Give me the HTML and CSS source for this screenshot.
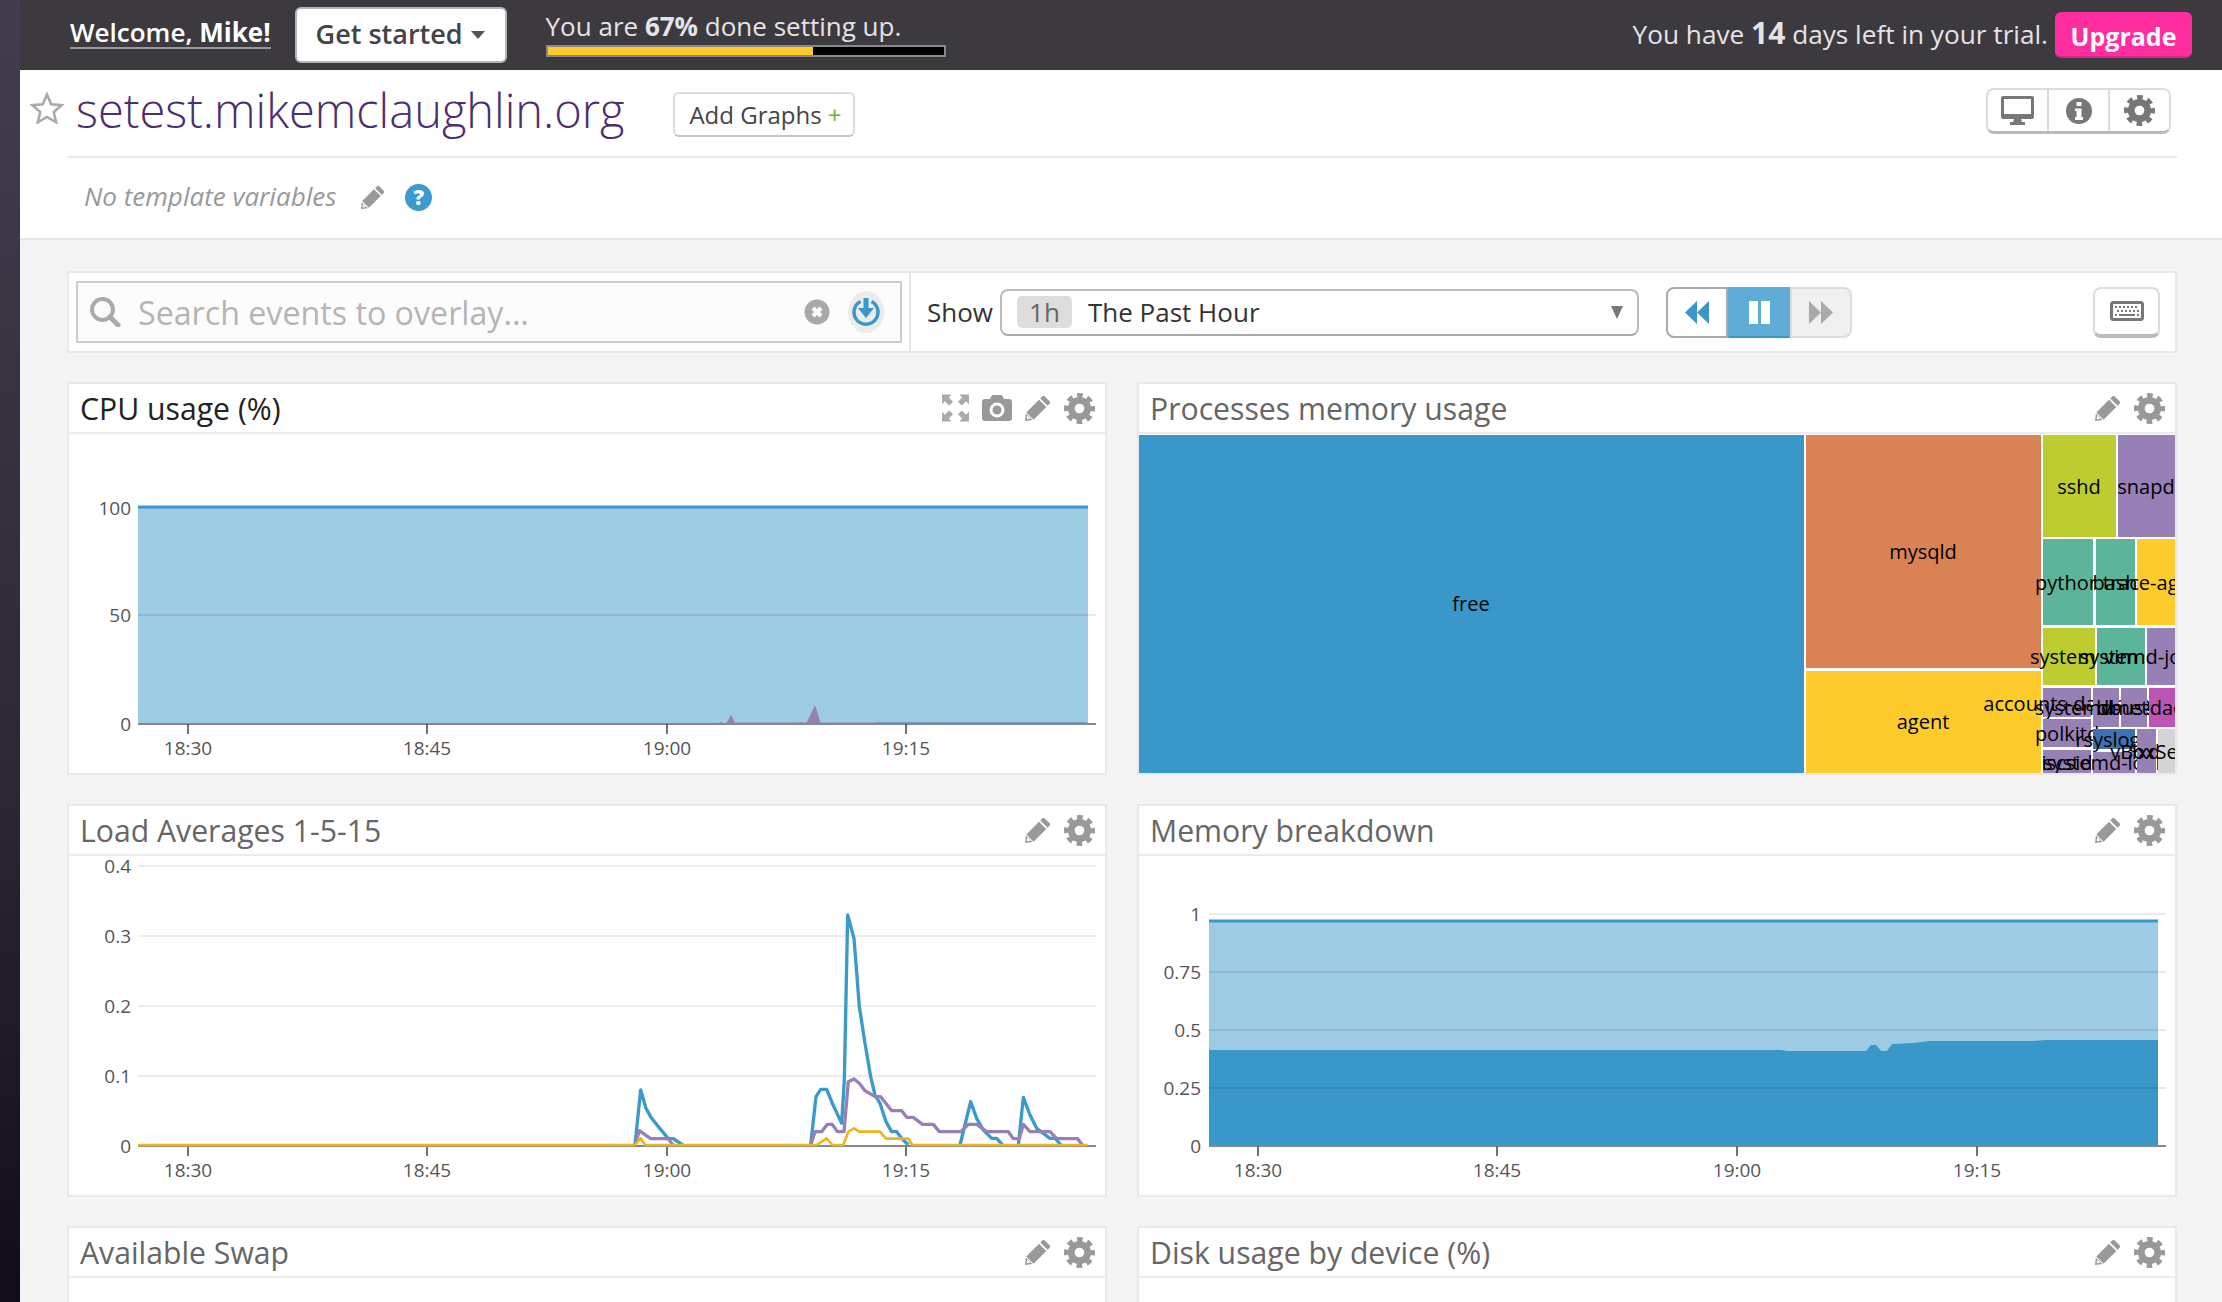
FILE: index.html
```html
<!DOCTYPE html>
<html lang="en-us">
  <head>
    <meta charset="utf-8">
    <title>setest.mikemclaughlin.org</title>
    <link rel="stylesheet" href="styles.css">
  </head>
  <body>
    <svg class="defs" aria-hidden="true">
      <symbol id="i-gear" viewBox="0 0 32 32">
        <circle cx="16" cy="16" r="8.5" fill="none" stroke="currentColor" stroke-width="7"/>
        <circle cx="16" cy="16" r="13" fill="none" stroke="currentColor" stroke-width="6" stroke-dasharray="5.6 4.61" stroke-dashoffset="2.8"/>
      </symbol>
      <symbol id="i-pencil" viewBox="0 0 26 26">
        <path fill="currentColor" d="M19.5 1.2 24.8 6.5a1.5 1.5 0 0 1 0 2L22.6 10.7 15.3 3.4 17.5 1.2a1.5 1.5 0 0 1 2 0Z"/>
        <path fill="currentColor" d="M14 4.7 21.3 12 8.6 24.7 1.3 17.4Z"/>
        <path fill="currentColor" d="M.9 18.6 7.4 25.1 0 26Z"/>
        <path fill="#fff" d="M2.2 20.6 5.4 23.8 1.7 24.3Z"/>
      </symbol>
      <symbol id="i-camera" viewBox="0 0 30 26">
        <path fill="currentColor" fill-rule="evenodd" d="M3 4H8L9.5 1Q10 0 11 0H19Q20 0 20.500 1L22 4H27Q30 4 30 7V23Q30 26 27 26H3Q0 26 0 23V7Q0 4 3 4ZM15 7.500A7.500 7.500 0 1 0 15 22.500 7.500 7.500 0 1 0 15 7.500ZM15 10.500A4.500 4.500 0 1 1 15 19.500 4.500 4.500 0 1 1 15 10.500Z"/>
      </symbol>
      <symbol id="i-expand" viewBox="0 0 28 28">
        <g fill="currentColor">
          <path d="M0 0H10L7 3 11.500 7.500 7.500 11.500 3 7 0 10Z"/>
          <path transform="matrix(-1 0 0 1 28 0)" d="M0 0H10L7 3 11.500 7.500 7.500 11.500 3 7 0 10Z"/>
          <path transform="matrix(1 0 0 -1 0 28)" d="M0 0H10L7 3 11.500 7.500 7.500 11.500 3 7 0 10Z"/>
          <path transform="matrix(-1 0 0 -1 28 28)" d="M0 0H10L7 3 11.500 7.500 7.500 11.500 3 7 0 10Z"/>
        </g>
      </symbol>
    </svg>

    <div class="rail"></div>
    <div class="main">
      <div class="trialbar">
        <a class="welcome">Welcome, <b>Mike!</b></a>
        <button class="started">Get started <span class="caret"></span></button>
        <div class="setup">
          <div class="setup-text">You are <b>67%</b> done setting up.</div>
          <div class="setup-bar"><div class="setup-fill" style="width: 67%"></div></div>
        </div>
        <div class="trial-left">You have <b>14</b> days left in your trial.</div>
        <button class="upgrade">Upgrade</button>
      </div>

      <div class="page-head">
        <div class="title-row">
          <svg class="star" viewBox="0 0 34 32"><path d="M17 2.500 21.200 12.200 31.700 13.100 23.800 20 26.100 30.300 17 24.900 7.900 30.300 10.200 20 2.300 13.100 12.800 12.200Z"/></svg>
          <h1 class="dash-title">setest.mikemclaughlin.org</h1>
          <button class="add-graphs">Add Graphs <span class="plus">+</span></button>
          <div class="head-tools">
            <div class="head-tool">
              <svg width="33" height="29" viewBox="0 0 33 29"><path fill="#777" fill-rule="evenodd" d="M2 0H31Q33 0 33 2V21Q33 23 31 23H20L21 26H24V29H9V26H12L13 23H2Q0 23 0 21V2Q0 0 2 0ZM3 3V18H30V3Z"/></svg>
            </div>
            <div class="head-tool">
              <svg width="26" height="26" viewBox="0 0 26 26"><path fill="#777" fill-rule="evenodd" d="M13 0A13 13 0 1 1 13 26 13 13 0 1 1 13 0ZM10.500 4V8H15.500V4ZM9 10.500V13H10.500V19H9V22H17V19H15.500V10.500Z"/></svg>
            </div>
            <div class="head-tool">
              <svg class="gear-lg"><use href="#i-gear"/></svg>
            </div>
          </div>
        </div>
        <div class="template-row">
          <span class="no-vars">No template variables</span>
          <svg class="ico pencil-sm"><use href="#i-pencil"/></svg>
          <span class="help">?</span>
        </div>
      </div>

      <div class="content">
        <div class="event-bar">
          <div class="search-cell">
            <div class="search-box">
              <svg class="search-ico" width="31" height="30" viewBox="0 0 31 30"><circle cx="12.500" cy="12.500" r="10.500" fill="none" stroke="#aaa" stroke-width="4"/><path d="M20 20 28 28" stroke="#aaa" stroke-width="5" stroke-linecap="round"/></svg>
              <span class="placeholder">Search events to overlay...</span>
              <svg class="clear-ico" width="26" height="26" viewBox="0 0 26 26"><circle cx="13" cy="13" r="12.500" fill="#a8a8a8"/><path d="M9 9 17 17M17 9 9 17" stroke="#fff" stroke-width="4"/></svg>
              <span class="overlay-btn">
                <svg width="28" height="30" viewBox="0 0 28 30"><path d="M8.500 4.500A12 12 0 1 0 19.500 4.500" fill="none" stroke="#3a97c9" stroke-width="3.500"/><path fill="#3a97c9" d="M11.500 1H16.500V11H22L14 21 6 11H11.500Z"/></svg>
              </span>
            </div>
          </div>
          <div class="time-cell">
            <span class="show">Show</span>
            <div class="range-select">
              <span class="range-tag">1h</span>
              <span class="range-name">The Past Hour</span>
              <span class="range-caret"></span>
            </div>
            <div class="player">
              <span class="player-btn rewind"><svg width="24" height="23" viewBox="0 0 24 23"><path fill="#3a97c9" d="M12 0V23L0 11.500ZM24 0V23L12 11.500Z"/></svg></span>
              <span class="player-btn pause"><svg width="23" height="23" viewBox="0 0 23 23"><path fill="#fff" d="M1 0H10V23H1ZM13 0H22V23H13Z"/></svg></span>
              <span class="player-btn forward"><svg width="24" height="23" viewBox="0 0 24 23"><path fill="#aaa" d="M0 0V23L12 11.500ZM12 0V23L24 11.500Z"/></svg></span>
            </div>
            <span class="keyboard-btn">
              <svg width="34" height="20" viewBox="0 0 34 20"><rect x="1.500" y="1.500" width="31" height="17" rx="2" fill="#fff" stroke="#777" stroke-width="3"/><path stroke="#777" stroke-width="2" stroke-dasharray="2 2" d="M5 6H29M7 10H29"/><path stroke="#777" stroke-width="2" d="M5 14H7M9 14H25M27 14H29"/></svg>
            </span>
          </div>
        </div>

        <div class="board">
          <section class="card">
            <header class="card-head is-active">
              <h2>CPU usage (%)</h2>
              <div class="card-tools">
                <svg class="ico expand"><use href="#i-expand"/></svg>
                <svg class="ico camera"><use href="#i-camera"/></svg>
                <svg class="ico pencil"><use href="#i-pencil"/></svg>
                <svg class="ico gear"><use href="#i-gear"/></svg>
              </div>
            </header>
            <svg class="chart" viewBox="69 434 1036 339">
              <rect x="138" y="507" width="950" height="217" fill="#9dcbe3"/>
              <path fill="#9680b6" d="M716 724 721 722 726 724 731 715 736 724H796L800 722 805 724H806L815 705 821 724Z"/>
              <path d="M736 723H1087" stroke="#9680b6" stroke-width="1"/>
              <path d="M876 723H1087" stroke="#3a97c9" stroke-width="1"/>
              <path d="M138 507H1088" stroke="#3a97c9" stroke-width="3"/>
              <path class="grid-over" d="M138 615H1096"/>
              <path class="axis" d="M138 724H1096"/>
              <path class="tick" d="M188 724V734M427 724V734M667 724V734M906 724V734"/>
              <g class="y-labels">
                <text x="131" y="508">100</text>
                <text x="131" y="615">50</text>
                <text x="131" y="724">0</text>
              </g>
              <g class="x-labels">
                <text x="188" y="748">18:30</text>
                <text x="427" y="748">18:45</text>
                <text x="667" y="748">19:00</text>
                <text x="906" y="748">19:15</text>
              </g>
            </svg>
          </section>

          <section class="card">
            <header class="card-head">
              <h2>Processes memory usage</h2>
              <div class="card-tools">
                <svg class="ico pencil"><use href="#i-pencil"/></svg>
                <svg class="ico gear"><use href="#i-gear"/></svg>
              </div>
            </header>
            <!-- cells are painted biggest first, each one covers the labels spilling from the cells before it -->
            <svg class="chart treemap" viewBox="1139 434 1036 339">
              <rect x="1139" y="435" width="665" height="338" fill="#3a97c9"/>
              <text x="1471" y="603">free</text>
              <rect x="1806" y="435" width="235" height="233" fill="#d98255"/>
              <text x="1923" y="551">mysqld</text>
              <rect x="1806" y="671" width="235" height="102" fill="#fecb2d"/>
              <text x="1923" y="721">agent</text>
              <rect x="2043" y="435" width="73" height="102" fill="#bdcc2f"/>
              <text x="2079" y="486">sshd</text>
              <rect x="2118" y="435" width="57" height="102" fill="#9680b6"/>
              <text x="2146" y="486">snapd</text>
              <rect x="2043" y="539" width="50" height="86" fill="#5cb59a"/>
              <text x="2068" y="582">python</text>
              <rect x="2096" y="539" width="39" height="86" fill="#5cb59a"/>
              <text x="2115" y="582">bash</text>
              <rect x="2137" y="539" width="38" height="86" fill="#fecb2d"/>
              <text x="2156" y="582">trace-agent</text>
              <rect x="2043" y="628" width="52" height="57" fill="#bdcc2f"/>
              <text x="2069" y="656">systemd</text>
              <rect x="2097" y="628" width="48" height="57" fill="#5cb59a"/>
              <text x="2121" y="656">vim</text>
              <rect x="2147" y="628" width="28" height="57" fill="#9680b6"/>
              <text x="2161" y="656">systemd-journald</text>
              <rect x="2043" y="688" width="48" height="29" fill="#9680b6"/>
              <text x="2067" y="703">accounts-daemon</text>
              <rect x="2093" y="688" width="26" height="39" fill="#9680b6"/>
              <text x="2106" y="707">systemd-udevd</text>
              <rect x="2121" y="688" width="26" height="39" fill="#9680b6"/>
              <text x="2134" y="707">lvmetad</text>
              <rect x="2149" y="688" width="26" height="39" fill="#bb55b4"/>
              <text x="2162" y="707">dbus-daemon</text>
              <rect x="2043" y="719" width="48" height="28" fill="#9680b6"/>
              <text x="2067" y="733">polkitd</text>
              <rect x="2093" y="729" width="42" height="20" fill="#3f70b3"/>
              <text x="2114" y="739">rsyslogd</text>
              <rect x="2043" y="750" width="48" height="23" fill="#9680b6"/>
              <text x="2067" y="762">iscsid</text>
              <rect x="2093" y="752" width="42" height="21" fill="#9680b6"/>
              <text x="2114" y="762">systemd-logind</text>
              <rect x="2137" y="729" width="19" height="44" fill="#9680b6"/>
              <text x="2146" y="751">lxd</text>
              <rect x="2158" y="729" width="17" height="44" fill="#d4d4d4"/>
              <text x="2166" y="751">vBoxService</text>
            </svg>
          </section>

          <section class="card">
            <header class="card-head">
              <h2>Load Averages 1-5-15</h2>
              <div class="card-tools">
                <svg class="ico pencil"><use href="#i-pencil"/></svg>
                <svg class="ico gear"><use href="#i-gear"/></svg>
              </div>
            </header>
            <svg class="chart" viewBox="69 856 1036 339">
              <path class="grid" d="M138 866H1096M138 936H1096M138 1006H1096M138 1076H1096"/>
              <path class="axis" d="M138 1146H1096"/>
              <g transform="translate(600 880) scale(.33333)" fill="none" stroke-width="10" stroke-linejoin="round">
                <g stroke="#3a9bcb">
                  <polyline points="105,795 122,630 138,685 155,715 175,740 205,776 220,776 248,795"/>
                  <polyline points="632,795 648,650 662,628 680,628 698,672 725,730 733,600 743,105 762,175 778,380 795,490 812,590 825,645 840,670 858,725 875,755 890,755 905,775 925,795"/>
                  <polyline points="1080,795 1112,665 1130,715 1150,750 1175,775 1190,775 1208,795"/>
                  <polyline points="1255,795 1270,652 1290,705 1310,745 1350,775 1365,775 1383,795"/>
                </g>
                <g stroke="#9680b6">
                  <polyline points="105,795 118,752 152,776 205,776 218,795"/>
                  <polyline points="632,795 645,755 665,755 682,733 697,733 712,755 732,755 745,605 762,597 778,610 795,632 825,650 842,650 875,692 905,692 920,712 940,712 968,733 1000,733 1018,755 1083,755 1105,733 1130,733 1160,755 1225,755 1240,776 1258,776 1270,733 1290,755 1350,755 1370,776 1433,776 1447,795"/>
                </g>
                <polyline stroke="#ecb51f" stroke-width="8" points="-1386,795 105,795 122,775 135,795 650,795 680,775 697,795 730,795 745,755 762,745 778,755 840,755 858,776 925,776 937,795 1462,795"/>
              </g>
              <path class="tick" d="M188 1147V1156M427 1147V1156M667 1147V1156M906 1147V1156"/>
              <g class="y-labels">
                <text x="131" y="866">0.4</text>
                <text x="131" y="936">0.3</text>
                <text x="131" y="1006">0.2</text>
                <text x="131" y="1076">0.1</text>
                <text x="131" y="1146">0</text>
              </g>
              <g class="x-labels">
                <text x="188" y="1170">18:30</text>
                <text x="427" y="1170">18:45</text>
                <text x="667" y="1170">19:00</text>
                <text x="906" y="1170">19:15</text>
              </g>
            </svg>
          </section>

          <section class="card">
            <header class="card-head">
              <h2>Memory breakdown</h2>
              <div class="card-tools">
                <svg class="ico pencil"><use href="#i-pencil"/></svg>
                <svg class="ico gear"><use href="#i-gear"/></svg>
              </div>
            </header>
            <svg class="chart" viewBox="1139 856 1036 339">
              <path class="grid" d="M1209 914H2166"/>
              <rect x="1209" y="921" width="949" height="225" fill="#9dcbe3"/>
              <path fill="#3a97c9" d="M1209 1050H1780L1788 1051H1827L1832 1051H1866L1871 1045H1876L1881 1051H1887L1892 1044 1913 1043 1930 1041 2033 1041 2047 1040H2158V1146H1209Z"/>
              <path d="M1209 921H2158" stroke="#3a97c9" stroke-width="3"/>
              <path class="grid-over" d="M1209 972H2166M1209 1030H2166M1209 1088H2166"/>
              <path class="axis" d="M1209 1146H2166"/>
              <path class="tick" d="M1258 1146V1156M1497 1146V1156M1737 1146V1156M1977 1146V1156"/>
              <g class="y-labels">
                <text x="1201" y="914">1</text>
                <text x="1201" y="972">0.75</text>
                <text x="1201" y="1030">0.5</text>
                <text x="1201" y="1088">0.25</text>
                <text x="1201" y="1146">0</text>
              </g>
              <g class="x-labels">
                <text x="1258" y="1170">18:30</text>
                <text x="1497" y="1170">18:45</text>
                <text x="1737" y="1170">19:00</text>
                <text x="1977" y="1170">19:15</text>
              </g>
            </svg>
          </section>

          <section class="card">
            <header class="card-head">
              <h2>Available Swap</h2>
              <div class="card-tools">
                <svg class="ico pencil"><use href="#i-pencil"/></svg>
                <svg class="ico gear"><use href="#i-gear"/></svg>
              </div>
            </header>
          </section>

          <section class="card">
            <header class="card-head">
              <h2>Disk usage by device (%)</h2>
              <div class="card-tools">
                <svg class="ico pencil"><use href="#i-pencil"/></svg>
                <svg class="ico gear"><use href="#i-gear"/></svg>
              </div>
            </header>
          </section>
        </div>
      </div>
    </div>
  </body>
</html>
```

FILE: styles.css
```css
html, body { margin: 0; padding: 0; height: 100%; overflow: hidden; }
body {
  display: flex;
  font-family: "Open Sans", "Liberation Sans", sans-serif;
  color: #333;
  background: #f4f4f4;
}
button { font-family: inherit; cursor: pointer; }
h1, h2 { margin: 0; font-weight: 400; }

.defs { position: absolute; width: 0; height: 0; }

.rail {
  flex: 0 0 20px;
  background: linear-gradient(#443d4e, #2d2735 60%, #100c18);
}
.main { flex: 1; min-width: 0; }

/* top trial bar */
.trialbar {
  display: flex;
  align-items: center;
  height: 70px;
  padding: 0 30px 0 50px;
  box-sizing: border-box;
  background: #3c3a3f;
  color: #e4e4e8;
  font-size: 26px;
}
.welcome {
  margin-top: -4px;
  color: #fff;
  font-weight: 600;
  border-bottom: 2px solid #999;
  line-height: 30px;
}
.welcome b { font-weight: 700; }
.started {
  display: flex;
  align-items: center;
  gap: 8px;
  width: 212px;
  height: 56px;
  margin-left: 24px;
  padding: 0 0 3px 19px;
  background: #fff;
  border: 2px solid #b5b5b5;
  border-radius: 6px;
  color: #444;
  font-size: 27px;
  font-weight: 600;
}
.caret { border: 7px solid transparent; border-top: 8px solid #555; border-bottom: 0; margin-top: 3px; }
.setup { width: 400px; margin-left: 39px; margin-top: -6px; }
.setup-text { line-height: 34px; padding-top: 1px; white-space: nowrap; }
.setup-text b { font-weight: 700; }
.setup-bar { height: 8px; margin-top: 2px; background: #000; border: 2px solid #888; }
.setup-fill { height: 100%; background: #fecb2d; }
.trial-left { margin-left: auto; margin-top: -6px; font-size: 26.200px; white-space: nowrap; }
.trial-left b { font-size: 30px; font-weight: 700; }
.upgrade {
  width: 137px;
  height: 46px;
  margin-left: 7px;
  padding: 4px 0 0;
  background: #ff2da0;
  border: 0;
  border-bottom: 2px solid #d8248a;
  border-radius: 6px;
  color: #fff;
  font-size: 25px;
  font-weight: 700;
}

/* dashboard heading */
.page-head {
  height: 168px;
  box-sizing: content-box;
  padding-left: 48px;
  padding-right: 45px;
  background: #fff;
  border-bottom: 2px solid #e6e6e6;
}
.title-row {
  display: flex;
  align-items: flex-start;
  height: 86px;
  border-bottom: 2px solid #e8e8e8;
}
.star { width: 34px; height: 32px; margin: 22px 12px 0 -38px; flex: none; }
.star path { fill: #fff; stroke: #aaa; stroke-width: 2.6; }
.dash-title {
  width: 547px;
  color: #4a2f6f;
  font-size: 47px;
  font-weight: 300;
  line-height: 80px;
  white-space: nowrap;
}
.add-graphs {
  width: 182px;
  height: 45px;
  margin: 22px 0 0 50px;
  padding: 0 0 0 3px;
  background: #fff;
  border: 2px solid #ddd;
  border-bottom-color: #c4c4c4;
  border-radius: 6px;
  color: #444;
  font-size: 24px;
  white-space: nowrap;
}
.plus { color: #5cb82e; }
.head-tools {
  display: flex;
  margin: 18px 6px 0 auto;
  border: 2px solid #ddd;
  border-bottom: 3px solid #bbb;
  border-radius: 8px;
  height: 41px;
  padding: 0;
}
.head-tool {
  display: flex;
  align-items: center;
  justify-content: center;
  width: 59px;
  border-left: 2px solid #ddd;
}
.head-tool:first-child { border-left: 0; }
.gear-lg { width: 31px; height: 31px; color: #777; }
.template-row {
  display: flex;
  align-items: center;
  height: 78px;
  padding-left: 16px;
}
.no-vars { padding-bottom: 2px; color: #999; font-size: 26px; font-style: italic; }
.pencil-sm { width: 24px; height: 24px; margin-left: 25px; color: #999; }
.help {
  width: 27px;
  height: 27px;
  margin-left: 20px;
  border-radius: 50%;
  background: #3d9ad1;
  color: #fff;
  font-size: 21px;
  font-weight: 800;
  line-height: 27px;
  text-align: center;
}

/* content */
.content { padding: 31px 45px 0 47px; }
.event-bar {
  display: flex;
  height: 82px;
  box-sizing: border-box;
  margin-bottom: 29px;
  background: #fff;
  border: 2px solid #e9e9e9;
}
.search-cell {
  flex: 0 0 842px;
  box-sizing: border-box;
  padding: 8px 7px 8px 7px;
  border-right: 2px solid #e6e6e6;
}
.search-box {
  display: flex;
  align-items: center;
  height: 100%;
  box-sizing: border-box;
  padding-left: 12px;
  background: #fcfcfc;
  border: 2px solid #ccc;
}
.placeholder { margin-left: 17px; color: #b5b5b5; font-size: 32.200px; white-space: nowrap; }
.clear-ico { margin-left: auto; }
.overlay-btn {
  display: flex;
  align-items: center;
  justify-content: center;
  width: 36px;
  height: 42px;
  margin: 0 16px 0 18px;
  border-radius: 50%;
  background: #ececec;
}
.time-cell { display: flex; flex: 1; align-items: center; padding: 0 15px 0 16px; }
.show { color: #333; font-size: 26px; }
.range-select {
  display: flex;
  align-items: center;
  width: 639px;
  height: 47px;
  box-sizing: border-box;
  margin-left: 7px;
  padding: 0 14px 0 15px;
  border: 2px solid #bbb;
  border-bottom-color: #aaa;
  border-radius: 8px;
  font-size: 26px;
}
.range-tag {
  width: 55px;
  height: 32px;
  border-radius: 5px;
  background: #ddd;
  color: #666;
  line-height: 32px;
  text-align: center;
}
.range-name { margin-left: 16px; color: #333; }
.range-caret { margin-left: auto; border: 6.500px solid transparent; border-top: 13px solid #777; border-bottom: 0; }
.player {
  display: flex;
  height: 51px;
  margin-left: 27px;
  box-sizing: border-box;
}
.player-btn {
  display: flex;
  align-items: center;
  justify-content: center;
  height: 51px;
  box-sizing: border-box;
  border: 2px solid #ddd;
}
.rewind { width: 62px; border-color: #aaa; border-radius: 8px 0 0 8px; }
.pause { width: 62px; background: #5fadd6; border-color: #5fadd6; border-bottom-color: #3a97c9; }
.forward { width: 62px; background: #f0f0f0; border-radius: 0 8px 8px 0; }
.keyboard-btn {
  display: flex;
  align-items: center;
  justify-content: center;
  width: 67px;
  height: 51px;
  box-sizing: border-box;
  margin-left: auto;
  border: 2px solid #ddd;
  border-bottom: 4px solid #bbb;
  border-radius: 8px;
}

/* graph cards */
.board { display: grid; grid-template-columns: 1040px 1040px; column-gap: 30px; row-gap: 29px; }
.card {
  height: 393px;
  box-sizing: border-box;
  background: #fff;
  border: 2px solid #e9e9e9;
}
.card-head {
  display: flex;
  align-items: center;
  height: 50px;
  box-sizing: border-box;
  padding: 0 10px 0 11px;
  border-bottom: 2px solid #ececec;
}
.card-head h2 { color: #666; font-size: 30.200px; white-space: nowrap; }
.card-head.is-active h2 { color: #222; }
.card-tools { display: flex; align-items: center; gap: 13px; margin-left: auto; color: #999; }
.ico { display: block; flex: none; }
.expand { width: 27px; height: 28px; color: #aaa; }
.camera { width: 30px; height: 26px; }
.pencil { width: 26px; height: 26px; }
.gear { width: 31px; height: 31px; }

.chart { display: block; width: 1036px; height: 339px; }
.chart text { font-family: "Open Sans", "Liberation Sans", sans-serif; font-size: 19px; fill: #555; }
.y-labels text { text-anchor: end; dominant-baseline: central; }
.x-labels text { text-anchor: middle; dominant-baseline: central; }
.grid { fill: none; stroke: #ececec; stroke-width: 2; }
.grid-over { fill: none; stroke: #000; stroke-opacity: .12; stroke-width: 1.5; }
.axis { fill: none; stroke: #888; stroke-width: 2; }
.tick { fill: none; stroke: #444; stroke-width: 1.5; }
.treemap text { fill: #000; font-size: 20px; text-anchor: middle; dominant-baseline: central; }
```
